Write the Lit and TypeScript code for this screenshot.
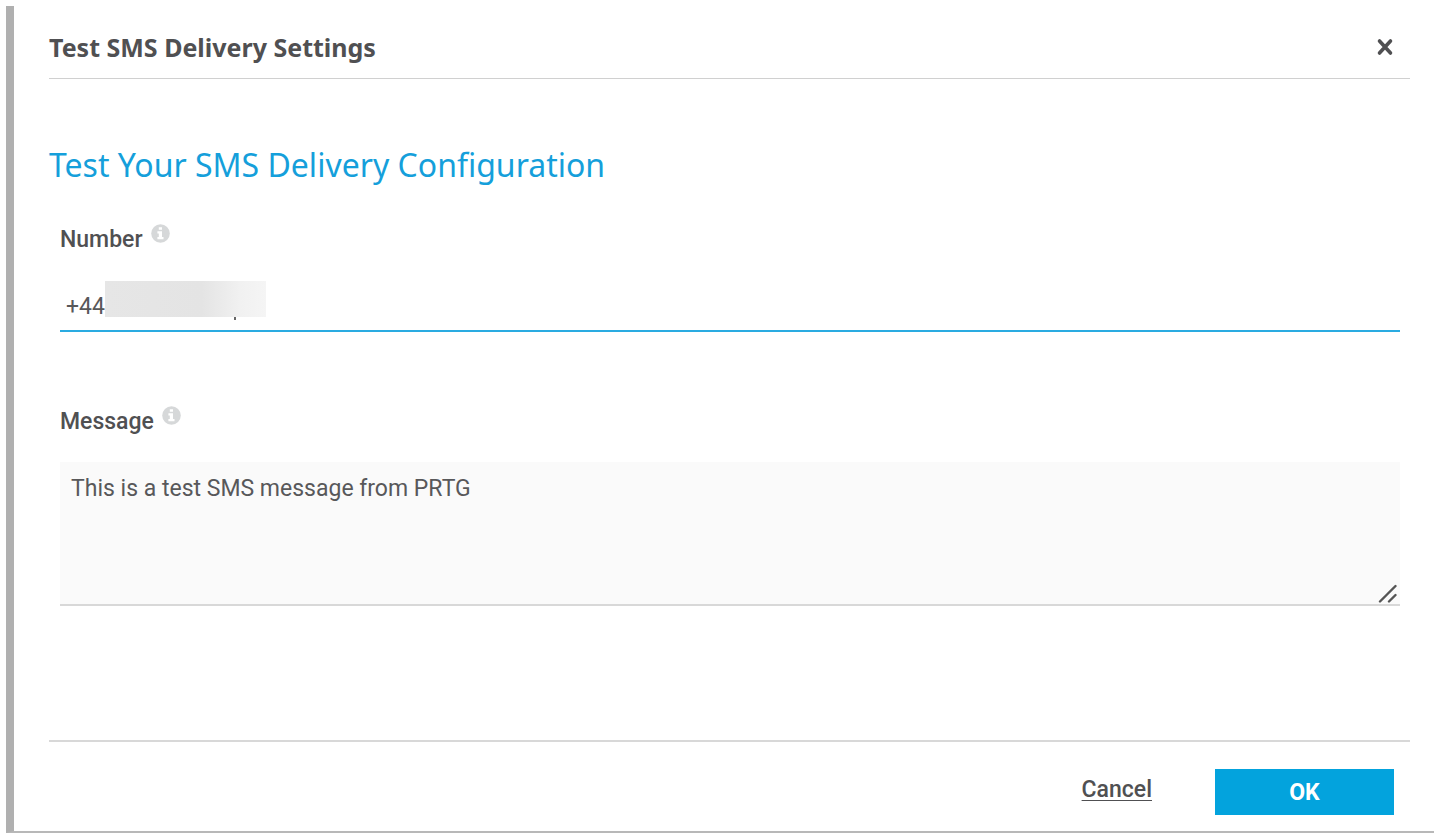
import { LitElement, html, css, svg } from "lit";
import { customElement, property } from "lit/decorators.js";

@customElement("info-icon")
export class InfoIcon extends LitElement {
  static styles = css`
    :host {
      display: block;
      width: 19px;
      height: 19px;
      color: #d6d8d9;
    }
    .glyph {
      display: block;
      width: 100%;
      height: 100%;
    }
  `;

  render() {
    return html`
      <svg class="glyph" viewBox="0 0 19 19" aria-hidden="true">
        <circle cx="9.5" cy="9.5" r="9.3" fill="currentColor"></circle>
        <path
          fill="#fff"
          d="M7.8 3.2h3.2v2.6H7.8zM6.4 7.2H11v5.8h1.5v2.2H6.4V13h1.4V9.4H6.4z"
        ></path>
      </svg>
    `;
  }
}

@customElement("app-root")
export class AppRoot extends LitElement {
  @property() number = "+44";
  @property() message = "This is a test SMS message from PRTG";

  static styles = css`
    :host {
      display: block;
      box-sizing: border-box;
      min-height: 100vh;
      padding: 6px 6px 4px;
      background: #fff;
      color: #505052;
      font-family: Roboto, "Liberation Sans", sans-serif;
      font-size: 23px;
      line-height: 32px;
    }
    .dialog {
      padding: 0 24px 16px 35px;
      border-left: 8px solid #b0b0b0;
      border-bottom: 2px solid #b8b8b8;
    }
    .header {
      display: flex;
      align-items: center;
      justify-content: space-between;
      padding: 23px 16px 13px 0;
      border-bottom: 1px solid #d0d0d0;
    }
    .title {
      margin: 0;
      font: 700 25px/36px "Noto Sans", sans-serif;
    }
    .close {
      display: flex;
      padding: 0;
      border: 0;
      background: none;
      color: inherit;
      cursor: pointer;
    }
    .cross {
      width: 18px;
      height: 18px;
    }
    .heading {
      margin: 62px 0 35px;
      color: #159fdb;
      font: 400 32px/48px "Noto Sans", sans-serif;
    }
    .fields {
      display: grid;
      gap: 74px;
      padding: 0 10px 0 11px;
    }
    .caption {
      display: flex;
      gap: 8px;
      margin-bottom: 24px;
    }
    .label {
      font-weight: 500;
    }
    .control {
      position: relative;
    }
    .input,
    .textarea {
      display: block;
      box-sizing: border-box;
      width: 100%;
      margin: 0;
      border: 0;
      border-radius: 0;
      outline: 0;
      color: #58585a;
      font: inherit;
    }
    .input {
      height: 52px;
      padding: 2px 6px 0;
      border-bottom: 2px solid #2aabe1;
      background: #fff;
    }
    .textarea {
      height: 144px;
      padding: 11px;
      border-bottom: 2px solid #d8d8d8;
      background: #fafafa;
      resize: none;
    }
    .mask {
      position: absolute;
      top: 1px;
      left: 45px;
      width: 161px;
      height: 36px;
      background: linear-gradient(90deg, #e6e6e6 0%, #e4e4e4 60%, #f1f1f1 84%, #f5f5f5 100%);
    }
    .mask::after {
      content: "";
      position: absolute;
      top: 36px;
      left: 129px;
      width: 2px;
      height: 3px;
      background: #666;
    }
    .grip {
      position: absolute;
      right: 2px;
      bottom: 3px;
      width: 20px;
      height: 19px;
      pointer-events: none;
    }
    .footer {
      display: flex;
      align-items: center;
      justify-content: flex-end;
      gap: 63px;
      margin-top: 134px;
      padding: 27px 16px 0 0;
      border-top: 2px solid #d8d8d8;
    }
    .cancel {
      padding-bottom: 4px;
      color: inherit;
      font-weight: 500;
      text-decoration: underline;
      text-underline-offset: 3px;
      text-decoration-thickness: 1px;
    }
    .ok {
      width: 179px;
      height: 46px;
      padding: 2px 0 0;
      border: 0;
      background: #03a3dd;
      color: #fff;
      font: inherit;
      font-weight: 700;
      cursor: pointer;
    }
  `;

  private cross = svg`<path d="M3.5 3L14.5 15M14.5 3L3.5 15" fill="none" stroke="currentColor" stroke-width="3.6" stroke-linecap="round" />`;

  render() {
    return html`
      <section class="dialog" role="dialog" aria-labelledby="title">
        <header class="header">
          <h1 class="title" id="title">Test SMS Delivery Settings</h1>
          <button class="close" type="button" aria-label="Close">
            <svg class="cross" viewBox="0 0 18 18">${this.cross}</svg>
          </button>
        </header>
        <h2 class="heading">Test Your SMS Delivery Configuration</h2>
        <div class="fields">
          <div class="field">
            <div class="caption">
              <label class="label" for="number">Number</label>
              <info-icon></info-icon>
            </div>
            <div class="control">
              <input class="input" id="number" type="text" .value=${this.number} />
              <span class="mask"></span>
            </div>
          </div>
          <div class="field">
            <div class="caption">
              <label class="label" for="message">Message</label>
              <info-icon></info-icon>
            </div>
            <div class="control">
              <textarea class="textarea" id="message" .value=${this.message}></textarea>
              <svg class="grip" viewBox="0 0 20 19" aria-hidden="true">
                <path
                  d="M2 17.5L17.5 2M11 17.5L17.5 11"
                  fill="none"
                  stroke="#555"
                  stroke-width="2.4"
                  stroke-linecap="round"
                ></path>
              </svg>
            </div>
          </div>
        </div>
        <footer class="footer">
          <a class="cancel" href="#">Cancel</a>
          <button class="ok" type="button">OK</button>
        </footer>
      </section>
    `;
  }
}
